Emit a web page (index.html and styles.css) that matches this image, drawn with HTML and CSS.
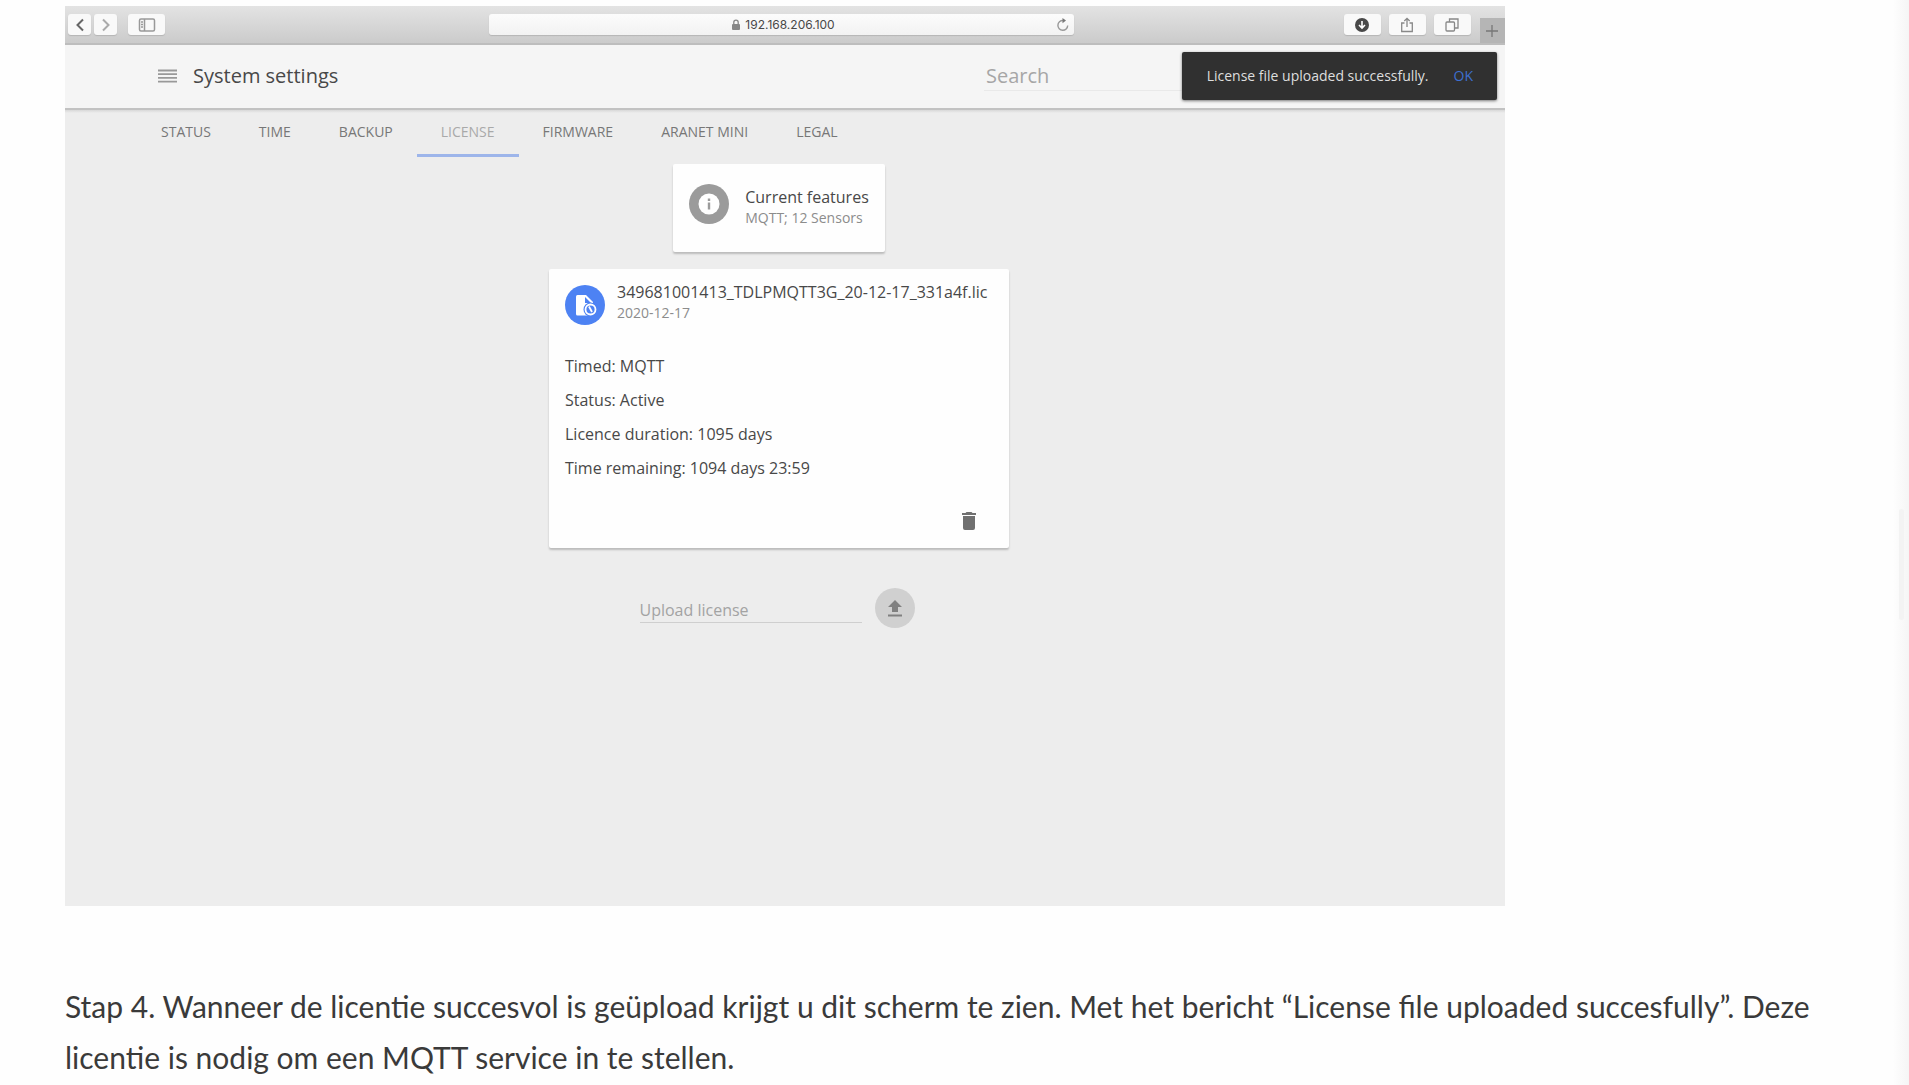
FILE: index.html
```html
<!DOCTYPE html>
<html lang="nl">
<head>
<meta charset="utf-8">
<meta name="viewport" content="width=device-width, initial-scale=1">
<title>Licentie uploaden</title>
<link rel="stylesheet" href="styles.css">
</head>
<body>
<main class="article">
  <section class="browser" aria-label="System settings">
    <div class="toolbar">
      <div class="toolbar-group">
        <button class="tool tool-narrow" aria-label="Back"><svg width="10" height="14" viewBox="0 0 10 14"><path d="M8 1.500 2.500 7 8 12.500" fill="none" stroke="#666" stroke-width="2"/></svg></button>
        <button class="tool tool-narrow" aria-label="Forward"><svg width="10" height="14" viewBox="0 0 10 14"><path d="M2 1.500 7.500 7 2 12.500" fill="none" stroke="#aaa" stroke-width="2"/></svg></button>
        <button class="tool tool-sidebar" aria-label="Sidebar"><svg width="18" height="14" viewBox="0 0 18 14"><g fill="none" stroke="#999" stroke-width="1.500"><rect x="1.500" y="1" width="15" height="12" rx="1.500"/><path d="M6.500 1v12M3 4h2M3 6.500h2M3 9h2"/></g></svg></button>
      </div>
      <div class="address">
        <svg width="8" height="12" viewBox="0 0 8 12"><rect y="5" width="8" height="6" rx="1" fill="#888"/><path d="M1.800 5V3.300a2.200 2.200 0 0 1 4.400 0V5" fill="none" stroke="#888" stroke-width="1.300"/></svg>
        <span>192.168.206.100</span>
        <button class="reload" aria-label="Reload"><svg width="14" height="14" viewBox="0 0 14 14"><path d="M11.700 7.500A4.900 4.900 0 1 1 7 2.500h1.500" fill="none" stroke="#999" stroke-width="1.400"/><path d="M6.500 0 10 2.600 6.500 5.200z" fill="#777"/></svg></button>
      </div>
      <div class="toolbar-group toolbar-actions">
        <button class="tool" aria-label="Downloads"><svg width="14" height="14" viewBox="0 0 14 14"><circle cx="7" cy="7" r="7" fill="#484848"/><path d="M7 3v6M4 7l3 3 3-3" fill="none" stroke="#fff" stroke-width="1.600"/></svg></button>
        <button class="tool" aria-label="Share"><svg width="14" height="16" viewBox="0 0 14 16"><path d="M4.500 6H1.700v8.500h10.600V6H9.500M7 10V1.500M4.300 4 7 1.300 9.700 4" fill="none" stroke="#888" stroke-width="1.300"/></svg></button>
        <button class="tool" aria-label="Tabs"><svg width="14" height="14" viewBox="0 0 14 14"><g fill="none" stroke="#888" stroke-width="1.300"><path d="M4.500 4V1h8.500v9H9.500"/><rect x="1" y="4" width="8.500" height="9" rx="1"/></g></svg></button>
      </div>
      <button class="new-tab" aria-label="New tab"><svg width="12" height="12" viewBox="0 0 12 12"><path d="M6 0v12M0 6h12" stroke="#777" stroke-width="1.300"/></svg></button>
    </div>

    <header class="app-bar">
      <button class="menu" aria-label="Menu"><svg width="19" height="14" viewBox="0 0 19 14"><path d="M0 1.500h19M0 5.200h19M0 8.900h19M0 12.600h19" stroke="#999" stroke-width="1.800"/></svg></button>
      <h1 class="app-title">System settings</h1>
      <input class="search" type="text" placeholder="Search" aria-label="Search">
    </header>
    <div class="toast" role="status"><span>License file uploaded successfully.</span><button class="toast-ok">OK</button></div>

    <nav class="tabs">
      <a class="tab" href="#status">STATUS</a>
      <a class="tab" href="#time">TIME</a>
      <a class="tab" href="#backup">BACKUP</a>
      <a class="tab tab-active" href="#license">LICENSE</a>
      <a class="tab" href="#firmware">FIRMWARE</a>
      <a class="tab" href="#mini">ARANET MINI</a>
      <a class="tab" href="#legal">LEGAL</a>
    </nav>

    <div class="content">
      <section class="card features">
        <svg class="avatar" viewBox="0 0 40 40"><circle cx="20" cy="20" r="20" fill="#9b9b9b"/><circle cx="20" cy="20" r="10.500" fill="#fff"/><path d="M20 14.500v2.500M20 18.500v7" stroke="#9b9b9b" stroke-width="2.400"/></svg>
        <div>
          <h2 class="card-title">Current features</h2>
          <p class="card-sub">MQTT; 12 Sensors</p>
        </div>
      </section>

      <section class="card license">
        <div class="license-head">
          <svg class="avatar" viewBox="0 0 40 40"><circle cx="20" cy="20" r="20" fill="#4d82f3"/><path d="M12.500 10H21l7 7v13.500H12.500A1.500 1.500 0 0 1 11 29V11.500A1.500 1.500 0 0 1 12.500 10z" fill="#fff"/><path d="M20 12v6h6z" fill="#4d82f3"/><circle cx="25.500" cy="24.500" r="7" fill="#4d82f3"/><circle cx="25.500" cy="24.500" r="5" fill="none" stroke="#fff" stroke-width="1.800"/><path d="M24 21.500l3 5.500" fill="none" stroke="#fff" stroke-width="1.800"/></svg>
          <div class="license-name">
            <h2 class="card-title">349681001413_TDLPMQTT3G_20-12-17_331a4f.lic</h2>
            <p class="card-sub">2020-12-17</p>
          </div>
        </div>
        <div class="details">
          <p>Timed: MQTT</p>
          <p>Status: Active</p>
          <p>Licence duration: 1095 days</p>
          <p>Time remaining: 1094 days 23:59</p>
        </div>
        <button class="delete" aria-label="Delete"><svg width="14" height="18" viewBox="0 0 14 18"><path d="M1 4h12v12a2 2 0 0 1-2 2H3a2 2 0 0 1-2-2zM0 1h3.500l1-1h5l1 1H14v2H0z" fill="#707070"/></svg></button>
      </section>

      <form class="upload">
        <input class="upload-name" type="text" placeholder="Upload license" aria-label="Upload license">
        <button class="upload-button" type="button" aria-label="Upload"><svg width="14" height="17" viewBox="0 0 14 17"><path d="M4 12V7H0l7-7 7 7h-4v5zM0 14.500h14v2H0z" fill="#808080"/></svg></button>
      </form>
    </div>
  </section>

  <p class="step">Stap 4. Wanneer de licentie succesvol is geüpload krijgt u dit scherm te zien. Met het bericht “License file uploaded succesfully”. Deze licentie is nodig om een MQTT service in te stellen.</p>
</main>
<div class="scroll-thumb"></div>
</body>
</html>
```

FILE: styles.css
```css
* {
  box-sizing: border-box;
}

body {
  margin: 0;
  background: linear-gradient(to left, #f5f5f5, #fefefe 16px);
  color: #3a3a3a;
}

h1, h2, p {
  margin: 0;
  font-weight: 400;
}

button {
  display: flex;
  align-items: center;
  justify-content: center;
  padding: 0;
  border: 0;
  background: none;
  font: inherit;
}

input {
  border: 0;
  border-radius: 0;
  background: none;
  font: inherit;
  outline: 0;
}

.article {
  padding: 6px 64px 0 65px;
}

.browser {
  position: relative;
  display: flex;
  flex-direction: column;
  max-width: 1440px;
  min-height: 900px;
  background: #ededed;
  color: #484848;
  font: 16px/20px "Open Sans", "Noto Sans", sans-serif;
}

/* Browser toolbar */
.toolbar {
  display: grid;
  grid-template-columns: 421fr 584fr 397fr 34px;
  align-items: center;
  height: 39px;
  padding-left: 3px;
  border-bottom: 2px solid #bdbdbd;
  background: linear-gradient(#e3e3e3, #cbcbcb);
}

.toolbar-group {
  display: flex;
  gap: 3px;
}

.toolbar-actions {
  justify-content: flex-end;
  gap: 8px;
}

.tool {
  width: 37px;
  height: 21px;
  border-radius: 3px;
  background: #f9f9f9;
  box-shadow: 0 1px 1px #b5b5b5;
}

.tool-narrow {
  width: 23px;
}

.tool-sidebar {
  margin-left: 8px;
}

.address {
  display: flex;
  align-items: center;
  gap: 5px;
  height: 21px;
  padding-right: 4px;
  border-radius: 3px;
  background: linear-gradient(#fcfcfc, #f2f2f2);
  box-shadow: 0 1px 1px #b5b5b5;
  font: 12px/20px Inter, "Liberation Sans", sans-serif;
}

.address svg:first-child {
  margin-left: auto;
}

.reload {
  margin-left: 216px;
}

.new-tab {
  align-self: end;
  justify-self: end;
  width: 25px;
  height: 25px;
  background: #b5b5b5;
}

/* Application header */
.app-bar {
  display: flex;
  align-items: center;
  height: 65px;
  padding: 0 93px 2px;
  background: #f5f5f5;
  border-bottom: 2px solid #c2c2c2;
}

.menu {
  margin-right: 16px;
}

.app-title {
  font-size: 20px;
  line-height: 28px;
}

.search {
  width: 428px;
  height: 30px;
  margin-left: auto;
  padding: 0 2px;
  border-bottom: 1px solid #e9e9e9;
  font-size: 20px;
}

.search::placeholder {
  color: #a6a6a6;
  opacity: 1;
}

.toast {
  position: absolute;
  top: 46px;
  right: 8px;
  display: flex;
  align-items: center;
  gap: 25px;
  height: 48px;
  padding: 0 24px 0 25px;
  border-radius: 2px;
  background: #303030;
  box-shadow: 0 1px 3px #777;
  color: #dedede;
  font-size: 14px;
}

.toast-ok {
  color: #3d6fd0;
}

.tabs {
  display: flex;
  flex-wrap: wrap;
  padding-left: 72px;
  background: linear-gradient(#d8d8d8, #ededed 3px);
}

.tab {
  height: 47px;
  padding: 11px 24px 0;
  color: #777;
  font-size: 14px;
  line-height: 22px;
  text-decoration: none;
}

.tab-active {
  border-bottom: 3px solid #9db5ea;
  color: #a9a9a9;
}

/* License page */
.content {
  display: flex;
  flex-direction: column;
  align-items: center;
  padding: 7px 12px 0 0;
}

.card {
  border-radius: 2px;
  background: #fefefe;
  box-shadow: 0 2px 2px #bcbcbc;
}

.avatar {
  flex: none;
  width: 40px;
  height: 40px;
}

.card-title {
  font-size: 16px;
  line-height: 22px;
}

.card-sub {
  color: #8c8c8c;
  font-size: 14px;
  line-height: 20px;
}

.features {
  display: flex;
  align-items: flex-start;
  gap: 16px;
  height: 88px;
  padding: 20px 16px 0;
}

.features .card-title {
  padding-top: 2px;
}

.license {
  display: flex;
  flex-direction: column;
  width: 460px;
  max-width: 100%;
  margin-top: 17px;
  padding: 12px 16px 18px;
}

.license-head {
  display: flex;
  align-items: flex-end;
  gap: 12px;
}

.license-name {
  padding-bottom: 2px;
}

.details {
  margin-top: 24px;
  line-height: 34px;
}

.delete {
  align-self: flex-end;
  margin: 27px 17px 0 0;
}

.upload {
  display: flex;
  align-items: center;
  gap: 13px;
  margin-top: 40px;
  padding-right: 4px;
}

.upload-name {
  width: 222px;
  height: 30px;
  padding: 4px 0 0;
  border-bottom: 1px solid #cfcfcf;
}

.upload-name::placeholder {
  color: #a3a3a3;
  opacity: 1;
}

.upload-button {
  width: 40px;
  height: 40px;
  border-radius: 50%;
  background: #d0d0d0;
}

.step {
  margin-top: 75px;
  font: 30px/51px Lato, sans-serif;
}

.scroll-thumb {
  position: fixed;
  top: 509px;
  right: 5px;
  width: 5px;
  height: 111px;
  border-radius: 3px;
  background: #f3f3f3;
}
```
